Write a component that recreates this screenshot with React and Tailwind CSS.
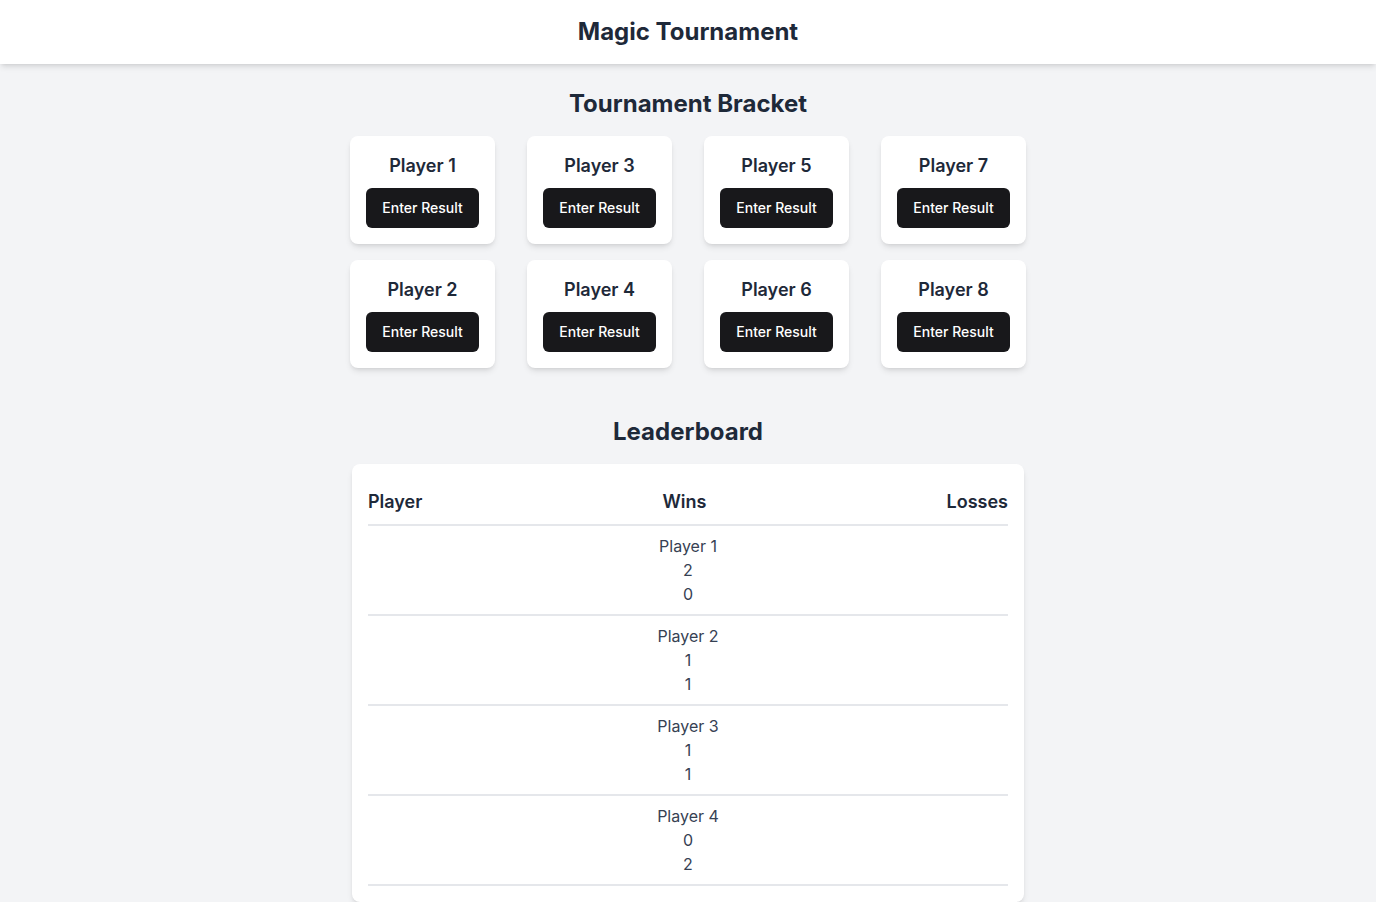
export default function App() {
  const columns = [
    ["Player 1", "Player 2"],
    ["Player 3", "Player 4"],
    ["Player 5", "Player 6"],
    ["Player 7", "Player 8"],
  ];
  const rows = [
    ["Player 1", 2, 0],
    ["Player 2", 1, 1],
    ["Player 3", 1, 1],
    ["Player 4", 0, 2],
  ];
  return (
    <div className="min-h-screen bg-gray-100 text-gray-800" style={{ fontFamily: "Inter, 'Noto Sans', sans-serif" }}>
      <header className="bg-white shadow-md h-16 flex items-center justify-center">
        <h1 className="text-2xl font-bold text-gray-800">Magic Tournament</h1>
      </header>
      <main className="p-6">
        <h2 className="text-2xl font-bold text-center mb-4">Tournament Bracket</h2>
        <div className="flex justify-center gap-8">
          {columns.map((col, i) => (
            <div key={i} className="flex flex-col gap-4">
              {col.map((p) => (
                <div key={p} className="w-[145px] bg-white rounded-lg shadow-md p-4 flex flex-col items-center">
                  <div className="text-lg font-semibold mb-2">{p}</div>
                  <button className="h-10 w-[113px] rounded-md bg-[#18181b] text-white text-sm font-medium">Enter Result</button>
                </div>
              ))}
            </div>
          ))}
        </div>
        <h2 className="text-2xl font-bold text-center mt-12 mb-4">Leaderboard</h2>
        <div className="max-w-2xl mx-auto bg-white rounded-lg shadow-md p-4">
          <div className="flex justify-between py-2 border-b-2 border-gray-200 text-lg font-semibold">
            <span>Player</span>
            <span>Wins</span>
            <span>Losses</span>
          </div>
          {rows.map(([n, w, l]) => (
            <div key={n} className="py-2 border-b-2 border-gray-200 text-center text-base text-gray-700">
              <div>{n}</div>
              <div>{w}</div>
              <div>{l}</div>
            </div>
          ))}
        </div>
      </main>
    </div>
  );
}
